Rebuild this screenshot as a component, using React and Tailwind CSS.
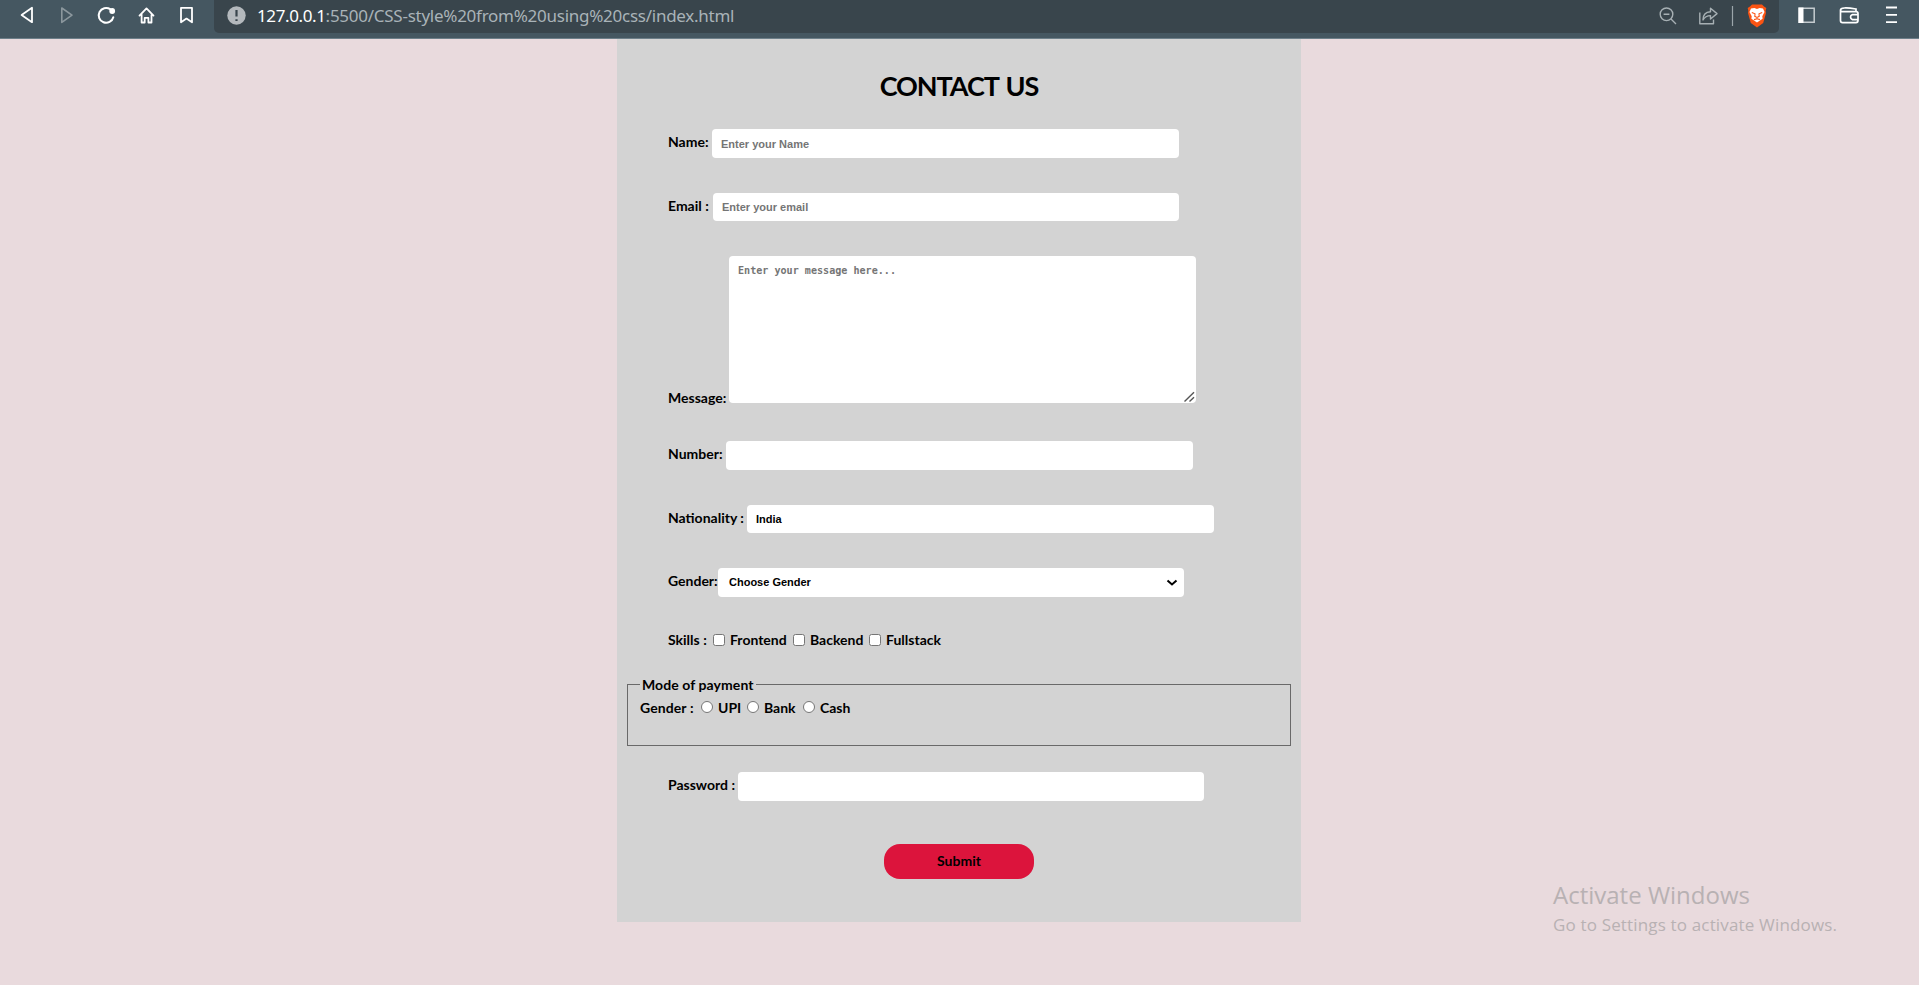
import React from "react";

const labelFont = "font-['Lato','Liberation_Sans',sans-serif] font-bold text-black whitespace-nowrap";

function BrowserBar() {
  return (
    <header className="flex h-[39px] w-full shrink-0 items-start border-b border-[#6d7f89] bg-[#455761] font-['Noto_Sans',sans-serif]">
      <svg width="214" height="33" viewBox="0 0 214 33" fill="none" stroke="#fff" strokeWidth="1.8" strokeLinejoin="round" strokeLinecap="round" className="shrink-0">
        <path d="M32 7.8V22.2L21.6 15Z" />
        <path d="M61.8 8V22.4L72 15.2Z" stroke="#8b979d" strokeWidth="1.6" />
        <path d="M113.3 17.2A7.4 7.4 0 1 1 110.2 9.2" strokeWidth="2" />
        <circle cx="112.2" cy="11" r="2.9" fill="#fff" stroke="none" />
        <path d="M139.5 15.6L146.5 8.4L153.5 15.6M141.6 14.4V22.5H144.7V17.8H148.4V22.5H151.5V14.4" />
        <path d="M181 7.8H192V22.3L186.5 18.6L181 22.3Z" />
      </svg>
      <div className="flex h-[33px] w-[1565px] shrink-0 items-start rounded-b-[5px] bg-[#39454c]">
        <svg width="43" height="33" viewBox="0 0 43 33" className="shrink-0">
          <circle cx="22.5" cy="15.5" r="9.2" fill="#b4b9bd" />
          <path d="M22.5 10V16.5M22.5 19.3V21" stroke="#39454c" strokeWidth="2.2" />
        </svg>
        <div className="h-[32px] w-[1397px] whitespace-pre pt-[3px] text-[17px] leading-[25px] text-[#a9b3b8]">
          <span className="text-white tracking-[-0.38px]">127.0.0.1</span>
          <span className="tracking-[-0.26px]">:5500/CSS-style%20from%20using%20css/index.html</span>
        </div>
        <svg width="84" height="33" viewBox="1654 0 84 33" fill="none" stroke="#a7b0b4" strokeWidth="1.4" className="shrink-0">
          <circle cx="1666.5" cy="14.3" r="6.3" />
          <path d="M1671 19L1676 24M1663.6 14.3H1669.4" />
          <path d="M1699.8 12.5V23.8H1713.5V19.5M1703 20C1703 14.5 1706 12 1710.5 11.8V8.2L1717 13.6L1710.5 19V15.6C1707 15.6 1704.7 16.8 1703 20Z" strokeLinejoin="round" />
          <path d="M1732.5 6V26" strokeWidth="1.2" stroke="#9ba5aa" />
        </svg>
        <div className="ml-[8px] mt-[4px] flex h-[24px] w-[22px] items-center justify-center">
          <svg width="20" height="24" viewBox="0 0 20 24">
            <path d="M5 0.5H15L17 2.5L19.3 4L18.6 7L19 9L16.2 19L10 23.5L3.8 19L1 9L1.4 7L.7 4L3 2.5Z" fill="#fb5413" />
            <path d="M4 4.6L7.4 4L10 5L12.6 4L16 4.6L17.5 8L15.3 12.2L15.6 14.8L10 18.5L4.4 14.8L4.7 12.2L2.5 8Z" fill="#fff" />
            <path d="M4.8 8.6L8 9.8L7.8 12.3L10 13.4L12.2 12.3L12 9.8L15.2 8.6M10 13.4V15M7 15.6L10 14.8L13 15.6" fill="none" stroke="#fb5413" strokeWidth="1.1" />
          </svg>
        </div>
      </div>
      <svg width="140" height="33" viewBox="1779 0 140 33" fill="none" stroke="#fff" strokeWidth="1.8" className="shrink-0">
        <path d="M1799 8.2H1814.2V22.2H1799Z" stroke="#c5ccd0" strokeWidth="1.5" />
        <path d="M1798.5 7.5H1803.5V23H1798.5Z" fill="#fff" stroke="none" />
        <path d="M1856 11.5V9Q1840.5 6.5 1840.5 10V20.5Q1840.5 22.6 1842.6 22.6H1856Q1858 22.6 1858 20.6V13.6Q1858 11.6 1856 11.6H1842Q1840.5 11.6 1840.5 9.8M1858 14.6H1852.4A2.6 2.6 0 0 0 1852.4 19.6H1858" strokeWidth="1.7" />
        <path d="M1886 7.5H1897M1886 14.8H1897M1886 22.2H1897" />
      </svg>
    </header>
  );
}

function Row({ className, labelClass, label, children }) {
  return (
    <div className={`flex items-start pl-[51px] ${className}`}>
      <span className={`shrink-0 text-[14px] leading-[18px] ${labelFont} ${labelClass}`}>{label}</span>
      {children}
    </div>
  );
}

const field = "block shrink-0 rounded-[4px] bg-white px-[9px] text-[11px] font-bold text-black font-['Liberation_Sans',Arial,sans-serif] placeholder:text-[#757575] placeholder:opacity-100 outline-none";
const option = `text-[14px] leading-[18px] ${labelFont}`;

function Box({ type, className }) {
  const shape = type === "radio" ? "rounded-full" : "rounded-[2.5px]";
  return <input type={type} className={`m-0 block size-[12px] shrink-0 appearance-none border border-[#767676] bg-white ${shape} ${className}`} />;
}

function ContactForm() {
  return (
    <form className="ml-[617px] flex h-[883px] w-[684px] shrink-0 flex-col bg-[#d3d3d3]">
      <h1 className={`mt-[29px] h-[36px] text-center text-[27px] leading-[36px] tracking-[-1.05px] [word-spacing:2px] ${labelFont}`}>CONTACT US</h1>
      <Row className="mt-[25px] h-[29px]" label="Name:" labelClass="w-[44px] pt-[4px]">
        <input placeholder="Enter your Name" className={`h-[29px] w-[467px] ${field}`} />
      </Row>
      <Row className="mt-[35px] h-[28px]" label="Email :" labelClass="w-[45px] pt-[4px]">
        <input placeholder="Enter your email" className={`h-[28px] w-[466px] ${field}`} />
      </Row>
      <Row className="mt-[35px] h-[147px]" label="Message:" labelClass="w-[61px] pt-[133px]">
        <div className="relative h-[147px] w-[467px] shrink-0">
          <textarea placeholder="Enter your message here..." className="block h-[147px] w-[467px] resize-none rounded-[4px] bg-white px-[9px] py-[8px] font-['DejaVu_Sans_Mono',monospace] text-[10.1px] leading-[13px] font-bold outline-none placeholder:text-[#757575]" />
          <svg width="12" height="12" viewBox="0 0 12 12" fill="none" stroke="#555" strokeWidth="1.4" className="absolute bottom-0 right-0">
            <path d="M0.5 10.5L10 1.2M5.5 10.5L10 6.3" />
          </svg>
        </div>
      </Row>
      <Row className="mt-[38px] h-[29px]" label="Number:" labelClass="w-[58px] pt-[4px]">
        <input className={`h-[29px] w-[467px] ${field}`} />
      </Row>
      <Row className="mt-[35px] h-[28px]" label="Nationality :" labelClass="w-[79px] pt-[4px]">
        <input defaultValue="India" className={`h-[28px] w-[467px] ${field}`} />
      </Row>
      <Row className="mt-[35px] h-[29px]" label="Gender:" labelClass="w-[50px] pt-[4px]">
        <div className={`flex h-[29px] w-[466px] items-center justify-between !pl-[11px] !pr-[6px] ${field}`}>
          <span>Choose Gender</span>
          <svg width="12" height="8" viewBox="0 0 12 8" fill="none" stroke="#000" strokeWidth="2"><path d="M1.5 1.5L6 5.5L10.5 1.5" /></svg>
        </div>
      </Row>
      <Row className="mt-[34px] h-[20px]" label="Skills :" labelClass="w-[45px]">
        <Box type="checkbox" className="mt-[3px]" />
        <span className={`ml-[5px] w-[63px] ${option}`}>Frontend</span>
        <Box type="checkbox" className="mt-[3px]" />
        <span className={`ml-[5px] w-[59px] ${option}`}>Backend</span>
        <Box type="checkbox" className="mt-[3px]" />
        <span className={`ml-[5px] ${option}`}>Fullstack</span>
      </Row>
      <fieldset className="mx-[10px] mt-[24px] flex h-[71px] flex-col border border-[#696969] px-[12px]">
        <legend className={`h-[18px] px-[2px] tracking-[0.08px] ${labelFont} text-[14px] leading-[20px]`}>Mode of payment</legend>
        <div className="flex items-start pt-[6px]">
          <span className={`w-[61px] tracking-[0.1px] ${option}`}>Gender :</span>
          <Box type="radio" className="mt-[2px]" />
          <span className={`ml-[5px] w-[29px] ${option}`}>UPI</span>
          <Box type="radio" className="mt-[2px]" />
          <span className={`ml-[5px] w-[39px] ${option}`}>Bank</span>
          <Box type="radio" className="mt-[2px]" />
          <span className={`ml-[5px] ${option}`}>Cash</span>
        </div>
      </fieldset>
      <Row className="mt-[26px] h-[29px]" label="Password :" labelClass="w-[70px] pt-[4px]">
        <input type="password" className={`h-[29px] w-[466px] ${field}`} />
      </Row>
      <button type="button" className={`mx-auto mt-[43px] h-[35px] w-[150px] rounded-[16px] bg-[#dc143c] pb-px ${option}`}>Submit</button>
    </form>
  );
}

export default function App() {
  return (
    <div className="relative flex h-[985px] w-full flex-col overflow-hidden bg-[#e9dadd]">
      <BrowserBar />
      <ContactForm />
      <div className="absolute left-[1553px] top-[877px] whitespace-nowrap font-['Open_Sans',sans-serif] text-[#b8b1b3]">
        <div className="text-[24px] leading-[36px]">Activate Windows</div>
        <div className="text-[17px] leading-[24px] tracking-[0.16px]">Go to Settings to activate Windows.</div>
      </div>
    </div>
  );
}
